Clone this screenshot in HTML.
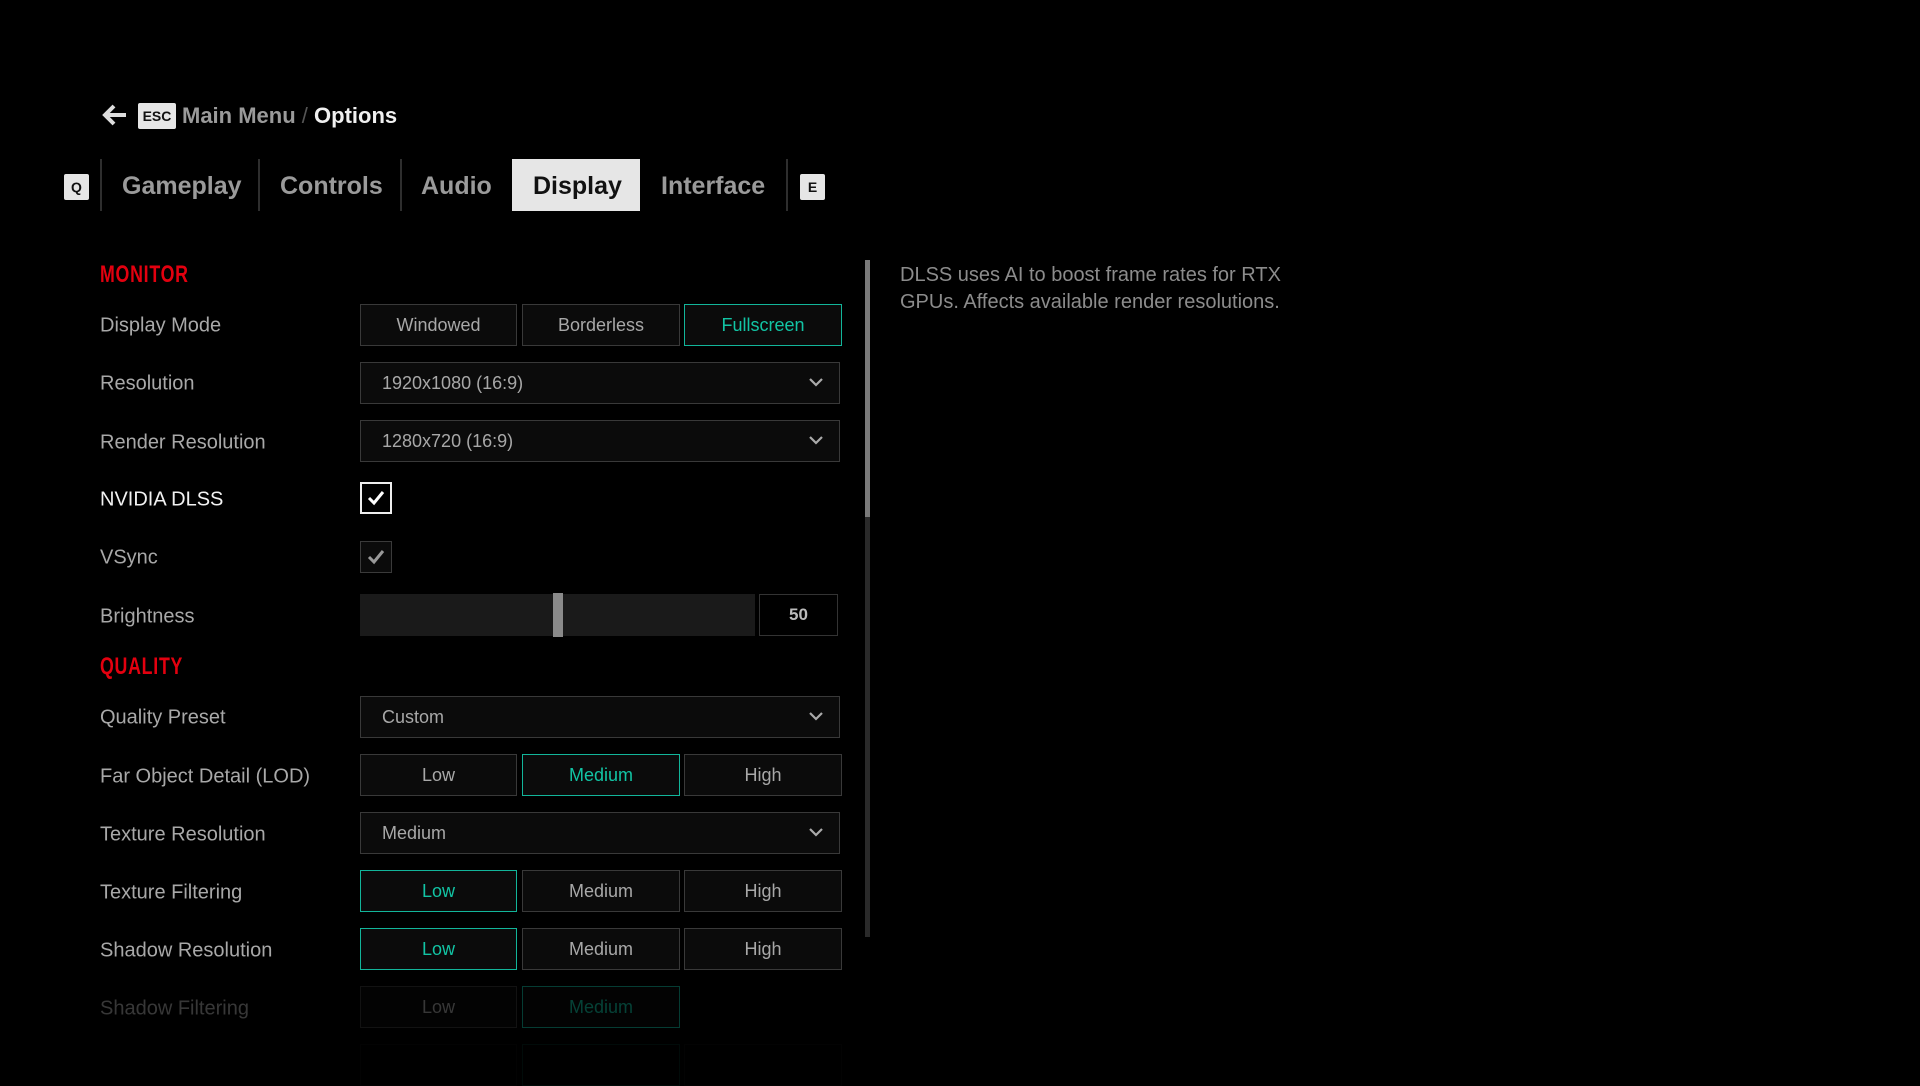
<!DOCTYPE html>
<html><head><meta charset="utf-8"><style>
*{margin:0;padding:0;box-sizing:border-box}
body{width:1920px;height:1080px;background:#000;font-family:"Liberation Sans",sans-serif;position:relative;overflow:hidden;color:#aaa}
.a{position:absolute}
.key{position:absolute;background:#e6e6e6;color:#111;font-weight:bold;display:flex;align-items:center;justify-content:center;border-radius:2px}
.tab{position:absolute;top:159px;height:52px;line-height:54px;font-size:25px;font-weight:bold;color:#9a9a9a}
.sep{position:absolute;top:159px;width:2px;height:52px;background:#2e2e2e}
.hdr{position:absolute;left:100px;font-family:"Liberation Sans Narrow","Liberation Sans",sans-serif;font-weight:bold;font-size:24px;color:#e3000f;letter-spacing:1px;transform:translateY(-50%) scaleX(0.74);transform-origin:left center}
.lbl{position:absolute;left:100px;font-size:20px;color:#a8a8a8;transform:translateY(-50%);margin-top:2px}
.btn{position:absolute;height:42px;background:#0b0b0b;border:1px solid #393939;font-size:18px;color:#a8a8a8;display:flex;align-items:center;justify-content:center}
.btn.on{border:1px solid #12b59a;color:#12c4a4}
.dd{position:absolute;left:360px;width:480px;height:42px;background:#0b0b0b;border:1px solid #393939;font-size:18px;color:#a8a8a8;padding-left:21px;display:flex;align-items:center}
.dd svg{position:absolute;right:16px;top:14px}
</style></head><body>
<svg class="a" style="left:102px;top:104px" width="26" height="22" viewBox="0 0 26 22"><path d="M12 2 L3 11 L12 20 M3 11 H24" stroke="#ddd" stroke-width="4" fill="none"/></svg>
<div class="key" style="left:138px;top:103px;width:38px;height:26px;font-size:14px">ESC</div>
<div class="a" style="left:182px;top:103px;font-size:22px;font-weight:bold;color:#9a9a9a;line-height:26px">Main Menu <span style="color:#555;font-weight:normal">/</span> <span style="color:#f0f0f0">Options</span></div>

<div class="key" style="left:64px;top:174px;width:25px;height:26px;font-size:14px">Q</div>
<div class="sep" style="left:100px"></div>
<div class="tab" style="left:122px">Gameplay</div>
<div class="sep" style="left:258px"></div>
<div class="tab" style="left:280px">Controls</div>
<div class="sep" style="left:400px"></div>
<div class="tab" style="left:421px">Audio</div>
<div class="a" style="left:512px;top:159px;width:128px;height:52px;background:#e6e6e6"></div>
<div class="tab" style="left:533px;color:#111">Display</div>
<div class="tab" style="left:661px">Interface</div>
<div class="sep" style="left:786px"></div>
<div class="key" style="left:800px;top:174px;width:25px;height:26px;font-size:14px">E</div>

<div class="hdr" style="top:275px">MONITOR</div>
<div class="lbl" style="top:324px">Display Mode</div>
<div class="btn" style="left:360px;top:304px;width:157px">Windowed</div>
<div class="btn" style="left:522px;top:304px;width:158px">Borderless</div>
<div class="btn on" style="left:684px;top:304px;width:158px">Fullscreen</div>

<div class="lbl" style="top:382px">Resolution</div>
<div class="dd" style="top:362px">1920x1080 (16:9)<svg width="14" height="10" viewBox="0 0 14 10"><path d="M1 2 L7 8 L13 2" stroke="#aaa" stroke-width="2.2" fill="none"/></svg></div>
<div class="lbl" style="top:441px">Render Resolution</div>
<div class="dd" style="top:420px">1280x720 (16:9)<svg width="14" height="10" viewBox="0 0 14 10"><path d="M1 2 L7 8 L13 2" stroke="#aaa" stroke-width="2.2" fill="none"/></svg></div>

<div class="lbl" style="top:498px;color:#f2f2f2">NVIDIA DLSS</div>
<div class="a" style="left:360px;top:482px;width:32px;height:32px;border:2px solid #eee;background:#000"><svg width="28" height="28" viewBox="0 0 28 28"><path d="M7 14 L12 19 L21 8" stroke="#fff" stroke-width="3" fill="none"/></svg></div>
<div class="lbl" style="top:556px">VSync</div>
<div class="a" style="left:360px;top:541px;width:32px;height:32px;border:1px solid #3a3a3a;background:#0b0b0b"><svg width="30" height="30" viewBox="0 0 30 30"><path d="M8 15 L13 20 L22 9" stroke="#999" stroke-width="3" fill="none"/></svg></div>

<div class="lbl" style="top:615px">Brightness</div>
<div class="a" style="left:360px;top:594px;width:395px;height:42px;background:#1a1a1a"></div>
<div class="a" style="left:553px;top:593px;width:10px;height:44px;background:#8a8a8a"></div>
<div class="a" style="left:759px;top:594px;width:79px;height:42px;border:1px solid #333;background:#000;color:#bbb;font-weight:bold;font-size:17px;display:flex;align-items:center;justify-content:center">50</div>

<div class="hdr" style="top:667px">QUALITY</div>
<div class="lbl" style="top:716px">Quality Preset</div>
<div class="dd" style="top:696px">Custom<svg width="14" height="10" viewBox="0 0 14 10"><path d="M1 2 L7 8 L13 2" stroke="#aaa" stroke-width="2.2" fill="none"/></svg></div>

<div class="lbl" style="top:775px">Far Object Detail (LOD)</div>
<div class="btn" style="left:360px;top:754px;width:157px">Low</div>
<div class="btn on" style="left:522px;top:754px;width:158px">Medium</div>
<div class="btn" style="left:684px;top:754px;width:158px">High</div>

<div class="lbl" style="top:833px">Texture Resolution</div>
<div class="dd" style="top:812px">Medium<svg width="14" height="10" viewBox="0 0 14 10"><path d="M1 2 L7 8 L13 2" stroke="#aaa" stroke-width="2.2" fill="none"/></svg></div>

<div class="lbl" style="top:891px">Texture Filtering</div>
<div class="btn on" style="left:360px;top:870px;width:157px">Low</div>
<div class="btn" style="left:522px;top:870px;width:158px">Medium</div>
<div class="btn" style="left:684px;top:870px;width:158px">High</div>

<div class="lbl" style="top:949px">Shadow Resolution</div>
<div class="btn on" style="left:360px;top:928px;width:157px">Low</div>
<div class="btn" style="left:522px;top:928px;width:158px">Medium</div>
<div class="btn" style="left:684px;top:928px;width:158px">High</div>

<div style="opacity:0.33">
<div class="lbl" style="top:1007px">Shadow Filtering</div>
<div class="btn" style="left:360px;top:986px;width:157px">Low</div>
<div class="btn on" style="left:522px;top:986px;width:158px">Medium</div>
</div>
<div style="opacity:0.06">
<div class="btn" style="left:360px;top:1044px;width:157px"></div>
<div class="btn on" style="left:522px;top:1044px;width:158px"></div>
<div class="btn" style="left:684px;top:1044px;width:158px"></div>
</div>

<div class="a" style="left:865px;top:260px;width:5px;height:677px;background:#2a2a2a"></div>
<div class="a" style="left:865px;top:260px;width:5px;height:257px;background:#7a7a7a"></div>

<div class="a" style="left:900px;top:262px;width:420px;font-size:20px;line-height:27px;color:#8c8c8c">DLSS uses AI to boost frame rates for RTX GPUs. Affects available render resolutions.</div>
</body></html>
